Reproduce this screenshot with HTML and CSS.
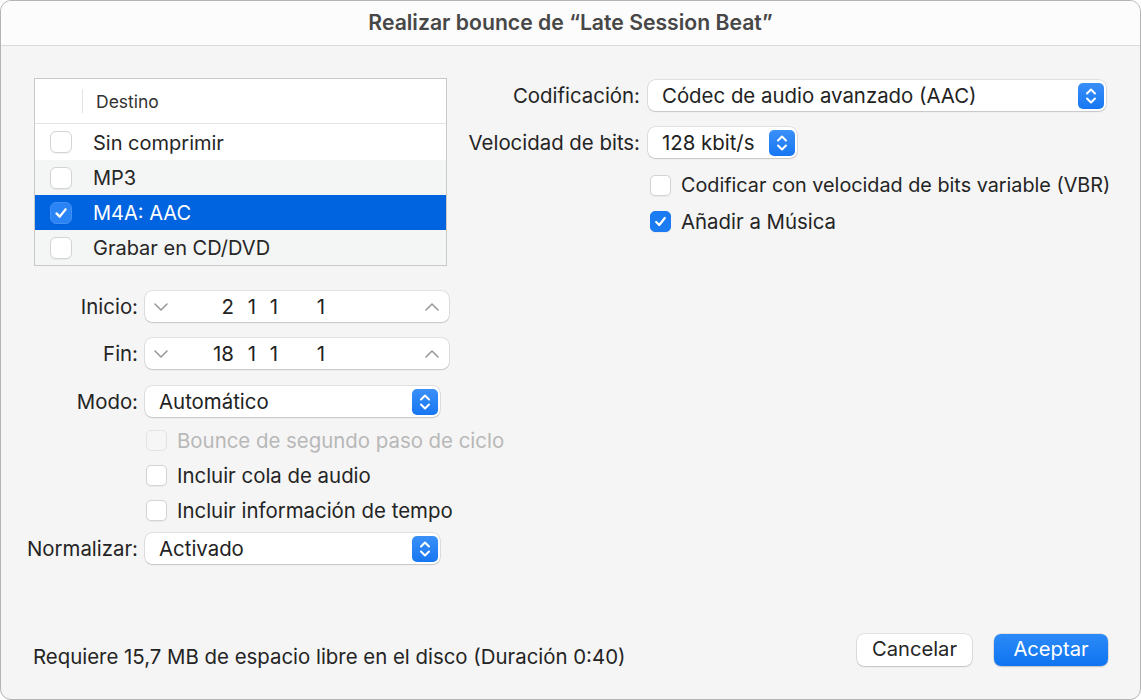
FILE: index.html
```html
<!DOCTYPE html>
<html lang="es">
<head>
<meta charset="utf-8">
<title>Realizar bounce</title>
<link rel="stylesheet" href="styles.css">
</head>
<body>
<div class="window">
  <div class="titlebar">Realizar bounce de “Late Session Beat”</div>
  <div class="content">
    <div class="left">
      <div class="table">
        <div class="thead"><span class="sep"></span><span class="th">Destino</span></div>
        <div class="row first"><span class="cb"></span><span>Sin comprimir</span></div>
        <div class="row"><span class="cb"></span><span>MP3</span></div>
        <div class="row sel"><span class="cb on"><svg viewBox="0 0 22 22"><path d="M6 11.5 L9.6 15 L16 7" fill="none" stroke="#fff" stroke-width="2.6" stroke-linecap="round" stroke-linejoin="round"/></svg></span><span>M4A: AAC</span></div>
        <div class="row"><span class="cb"></span><span>Grabar en CD/DVD</span></div>
      </div>

      <div class="form">
        <div class="frow r-inicio">
          <span class="lbl">Inicio:</span>
          <div class="field stepper">
            <svg class="chev" viewBox="0 0 16 10"><path d="M2 2 L8 8 L14 2" fill="none" stroke="#9a9a9a" stroke-width="1.6" stroke-linecap="round" stroke-linejoin="round"/></svg>
            <div class="nums"><span class="s1">2</span><span class="s2">1</span><span class="s3">1</span><span class="s4">1</span></div>
            <svg class="chev up" viewBox="0 0 16 10"><path d="M2 8 L8 2 L14 8" fill="none" stroke="#9a9a9a" stroke-width="1.6" stroke-linecap="round" stroke-linejoin="round"/></svg>
          </div>
        </div>

        <div class="frow r-fin">
          <span class="lbl">Fin:</span>
          <div class="field stepper">
            <svg class="chev" viewBox="0 0 16 10"><path d="M2 2 L8 8 L14 2" fill="none" stroke="#9a9a9a" stroke-width="1.6" stroke-linecap="round" stroke-linejoin="round"/></svg>
            <div class="nums"><span class="s1">18</span><span class="s2">1</span><span class="s3">1</span><span class="s4">1</span></div>
            <svg class="chev up" viewBox="0 0 16 10"><path d="M2 8 L8 2 L14 8" fill="none" stroke="#9a9a9a" stroke-width="1.6" stroke-linecap="round" stroke-linejoin="round"/></svg>
          </div>
        </div>

        <div class="frow r-modo">
          <span class="lbl">Modo:</span>
          <div class="field select narrow">
            <span class="val">Automático</span>
            <span class="updown"><svg viewBox="0 0 26 26"><path d="M9 10.5 L13 6.5 L17 10.5 M9 15.5 L13 19.5 L17 15.5" fill="none" stroke="#fff" stroke-width="2" stroke-linecap="round" stroke-linejoin="round"/></svg></span>
          </div>
        </div>

        <div class="frow r-checks">
          <span class="lbl"></span>
          <div class="checks">
            <div class="chk disabled"><span class="cb"></span><span>Bounce de segundo paso de ciclo</span></div>
            <div class="chk"><span class="cb"></span><span>Incluir cola de audio</span></div>
            <div class="chk"><span class="cb"></span><span>Incluir información de tempo</span></div>
          </div>
        </div>

        <div class="frow r-norm">
          <span class="lbl">Normalizar:</span>
          <div class="field select narrow">
            <span class="val">Activado</span>
            <span class="updown"><svg viewBox="0 0 26 26"><path d="M9 10.5 L13 6.5 L17 10.5 M9 15.5 L13 19.5 L17 15.5" fill="none" stroke="#fff" stroke-width="2" stroke-linecap="round" stroke-linejoin="round"/></svg></span>
          </div>
        </div>
      </div>
    </div>

    <div class="right">
      <div class="frow rr-cod">
        <span class="lbl rl">Codificación:</span>
        <div class="field select wide">
          <span class="val">Códec de audio avanzado (AAC)</span>
          <span class="updown"><svg viewBox="0 0 26 26"><path d="M9 10.5 L13 6.5 L17 10.5 M9 15.5 L13 19.5 L17 15.5" fill="none" stroke="#fff" stroke-width="2" stroke-linecap="round" stroke-linejoin="round"/></svg></span>
        </div>
      </div>

      <div class="frow rr-vel">
        <span class="lbl rl">Velocidad de bits:</span>
        <div class="field select small">
          <span class="val">128 kbit/s</span>
          <span class="updown"><svg viewBox="0 0 26 26"><path d="M9 10.5 L13 6.5 L17 10.5 M9 15.5 L13 19.5 L17 15.5" fill="none" stroke="#fff" stroke-width="2" stroke-linecap="round" stroke-linejoin="round"/></svg></span>
        </div>
      </div>

      <div class="frow rr-checks">
        <span class="lbl rl"></span>
        <div class="checks rchecks">
          <div class="chk"><span class="cb"></span><span>Codificar con velocidad de bits variable (VBR)</span></div>
          <div class="chk"><span class="cb on"><svg viewBox="0 0 22 22"><path d="M6 11.5 L9.6 15 L16 7" fill="none" stroke="#fff" stroke-width="2.6" stroke-linecap="round" stroke-linejoin="round"/></svg></span><span>Añadir a Música</span></div>
        </div>
      </div>
    </div>
  </div>
  <div class="footer">
    <span class="info">Requiere 15,7 MB de espacio libre en el disco (Duración 0:40)</span>
    <div class="buttons">
      <button class="btn">Cancelar</button>
      <button class="btn primary">Aceptar</button>
    </div>
  </div>
</div>
</body>
</html>
```

FILE: styles.css
```css
* { box-sizing: border-box; }
html, body { margin: 0; padding: 0; background: #ffffff; }
body {
  font-family: Inter, "Noto Sans", "Liberation Sans", sans-serif;
  color: #242424;
  font-size: 20.4px;
}
.window {
  width: 1141px;
  height: 700px;
  border: 1px solid #b4b4b4;
  border-radius: 11px;
  background: #f5f5f5;
  overflow: hidden;
  display: flex;
  flex-direction: column;
}
.titlebar {
  height: 45px;
  flex: none;
  background: #fcfcfc;
  border-bottom: 1px solid #dadada;
  text-align: center;
  font-weight: 600;
  font-size: 21.2px;
  color: #474747;
  line-height: 43px;
}
.content {
  flex: 1;
  display: flex;
  padding-top: 32px;
}
.left {
  width: 459px;
  flex: none;
}

/* table */
.table {
  margin-left: 33px;
  width: 413px;
  border: 1px solid #c9c9c9;
  background: #f4f5f5;
}
.thead {
  height: 45px;
  background: #ffffff;
  border-bottom: 1px solid #e3e3e3;
  display: flex;
  align-items: center;
  font-size: 17.5px;
  color: #333333;
}
.thead .sep {
  width: 1px;
  height: 24px;
  background: #e2e2e2;
  margin-left: 47px;
  margin-right: 13px;
}
.row {
  height: 35px;
  display: flex;
  align-items: center;
  padding-left: 15px;
  font-size: 20px;
  color: #262626;
}
.row span:last-child { padding-top: 1px; }
.row.first { background: #ffffff; height: 36px; }
.row .cb { margin-right: 21px; }
.row.sel { background: #0064e1; color: #ffffff; }

/* checkbox */
.cb {
  width: 21px;
  height: 21px;
  flex: none;
  border-radius: 5px;
  background: #ffffff;
  border: 1px solid #d4d4d4;
  box-shadow: 0 0.5px 1px rgba(0,0,0,0.05);
  display: inline-flex;
}
.row .cb { width: 22px; height: 22px; border-radius: 6px; }
.cb svg { width: 100%; height: 100%; }
.cb.on {
  background: #1b7bf3;
  border-color: #1b7bf3;
}
.row.sel .cb.on { background: #2a84f5; border-color: #3f8ff4; }

/* form rows */
.form {
  margin-left: 19px;
  margin-top: 25px;
}
.frow {
  display: flex;
  align-items: center;
  gap: 7px;
}
.lbl {
  width: 118px;
  flex: none;
  text-align: right;
  white-space: nowrap;
}
.r-fin { margin-top: 16px; }
.r-modo { margin-top: 17px; }
.r-checks { margin-top: 6px; align-items: flex-start; }
.r-norm { margin-top: 5px; }

.field {
  height: 31px;
  background: #ffffff;
  border-radius: 7px;
  box-shadow: 0 0 0 0.5px rgba(0,0,0,0.17), 0 1px 1.5px rgba(0,0,0,0.12);
  display: flex;
  align-items: center;
  flex: none;
}
.stepper { width: 304px; padding: 0 9px 0 8px; }
.chev { width: 16px; height: 10px; flex: none; }
.chev.up { margin-left: auto; }
.nums { display: flex; margin-left: 25px; color: #222222; }
.nums span { text-align: right; }
.nums .s1 { width: 40px; }
.nums .s2 { width: 22px; }
.nums .s3 { width: 22px; }
.nums .s4 { width: 47px; }

.select { padding-left: 14px; padding-right: 2px; color: #222222; }
.select .updown {
  margin-left: auto;
  width: 26px;
  height: 26px;
  border-radius: 5px;
  background: linear-gradient(#3b90f8, #1676f2);
  display: inline-flex;
  flex: none;
}
.select .updown svg { width: 26px; height: 26px; }
.narrow { width: 295px; }

.checks { display: flex; flex-direction: column; }
.chk {
  height: 35px;
  display: flex;
  align-items: center;
  white-space: nowrap;
}
.chk .cb { margin-left: 1px; margin-right: 10px; }
.chk.disabled { color: #b8b8b8; }
.chk.disabled .cb { background: #f6f6f6; border-color: #e3e3e3; box-shadow: none; }

/* right column */
.right { flex: 1; padding-top: 2px; }
.right .frow { gap: 8px; }
.rl { width: 180px; }
.rr-vel { margin-top: 16px; }
.rr-checks { margin-top: 9px; }
.rchecks .chk { height: 36px; }
.rchecks .chk .cb { margin-left: 2px; }
.rchecks .chk:first-child span:last-child { font-size: 19.8px; }
.wide { width: 458px; }
.small { width: 149px; }

/* footer */
.footer {
  height: 80px;
  flex: none;
  display: flex;
  align-items: flex-start;
  padding: 0 32px 0 32px;
}
.info {
  margin-top: 26px;
  line-height: 24px;
}
.buttons {
  margin-left: auto;
  margin-top: 15px;
  display: flex;
  gap: 22px;
}
.btn {
  font-family: inherit;
  font-size: 20.2px;
  height: 32px;
  border: none;
  border-radius: 7px;
  background: #ffffff;
  color: #262626;
  box-shadow: 0 0 0 0.5px rgba(0,0,0,0.17), 0 1px 1.5px rgba(0,0,0,0.14);
  width: 115px;
  padding: 0 0 3px 0;
}
.btn.primary {
  width: 114px;
  background: linear-gradient(#2b8af7, #0f74f1);
  color: #ffffff;
}
```
